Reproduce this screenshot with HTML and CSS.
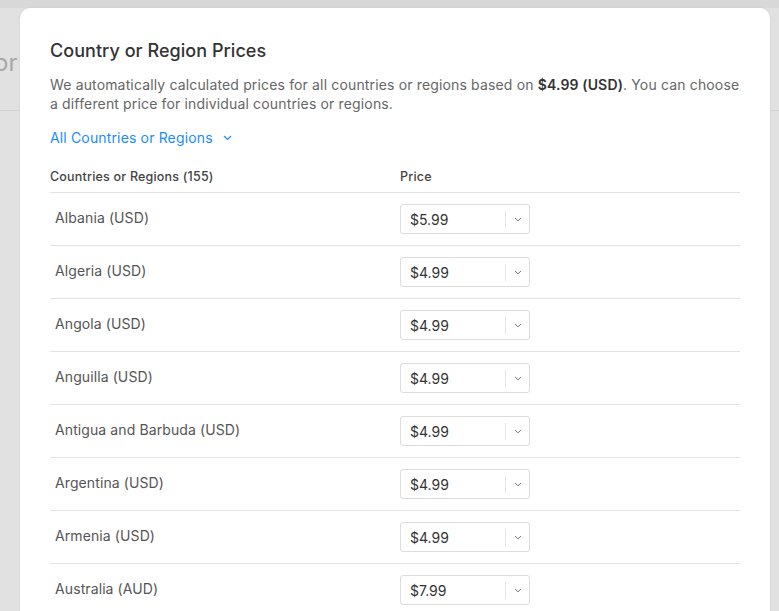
FILE: index.html
```html
<!DOCTYPE html>
<html>
<head>
<meta charset="utf-8">
<link rel="stylesheet" href="styles.css">
</head>
<body>
<div class="backdrop">
  <div class="bg-page">
    <div class="bg-head"><span class="bg-word">or</span></div>
  </div>
  <div class="modal">
    <h1 class="title">Country or Region Prices</h1>
    <p class="desc">We automatically calculated prices for all countries or regions based on <b>$4.99 (USD)</b>. You can choose a different price for individual countries or regions.</p>
    <a class="filter">All Countries or Regions <svg class="chev-blue" width="9" height="6" viewBox="0 0 9 6"><path d="M1 1l3.5 3.5L8 1" fill="none" stroke="#1a8cff" stroke-width="1.2"/></svg></a>
    <div class="table">
      <div class="thead">
        <div class="c1">Countries or Regions (155)</div>
        <div class="c2">Price</div>
      </div>
      <div class="row"><div class="c1 name">Albania (USD)</div><div class="c2"><div class="sel"><span class="val">$5.99</span><span class="arr"><svg width="8" height="5" viewBox="0 0 8 5"><path d="M1 1l3 2.8L7 1" fill="none" stroke="#777" stroke-width="1"/></svg></span></div></div></div>
      <div class="row"><div class="c1 name">Algeria (USD)</div><div class="c2"><div class="sel"><span class="val">$4.99</span><span class="arr"><svg width="8" height="5" viewBox="0 0 8 5"><path d="M1 1l3 2.8L7 1" fill="none" stroke="#777" stroke-width="1"/></svg></span></div></div></div>
      <div class="row"><div class="c1 name">Angola (USD)</div><div class="c2"><div class="sel"><span class="val">$4.99</span><span class="arr"><svg width="8" height="5" viewBox="0 0 8 5"><path d="M1 1l3 2.8L7 1" fill="none" stroke="#777" stroke-width="1"/></svg></span></div></div></div>
      <div class="row"><div class="c1 name">Anguilla (USD)</div><div class="c2"><div class="sel"><span class="val">$4.99</span><span class="arr"><svg width="8" height="5" viewBox="0 0 8 5"><path d="M1 1l3 2.8L7 1" fill="none" stroke="#777" stroke-width="1"/></svg></span></div></div></div>
      <div class="row"><div class="c1 name">Antigua and Barbuda (USD)</div><div class="c2"><div class="sel"><span class="val">$4.99</span><span class="arr"><svg width="8" height="5" viewBox="0 0 8 5"><path d="M1 1l3 2.8L7 1" fill="none" stroke="#777" stroke-width="1"/></svg></span></div></div></div>
      <div class="row"><div class="c1 name">Argentina (USD)</div><div class="c2"><div class="sel"><span class="val">$4.99</span><span class="arr"><svg width="8" height="5" viewBox="0 0 8 5"><path d="M1 1l3 2.8L7 1" fill="none" stroke="#777" stroke-width="1"/></svg></span></div></div></div>
      <div class="row"><div class="c1 name">Armenia (USD)</div><div class="c2"><div class="sel"><span class="val">$4.99</span><span class="arr"><svg width="8" height="5" viewBox="0 0 8 5"><path d="M1 1l3 2.8L7 1" fill="none" stroke="#777" stroke-width="1"/></svg></span></div></div></div>
      <div class="row"><div class="c1 name">Australia (AUD)</div><div class="c2"><div class="sel"><span class="val">$7.99</span><span class="arr"><svg width="8" height="5" viewBox="0 0 8 5"><path d="M1 1l3 2.8L7 1" fill="none" stroke="#777" stroke-width="1"/></svg></span></div></div></div>
    </div>
  </div>
</div>
</body>
</html>
```
FILE: styles.css
```css
* { box-sizing: border-box; }
html, body { margin: 0; padding: 0; }
body {
  width: 779px;
  height: 611px;
  overflow: hidden;
  font-family: Inter, "Liberation Sans", sans-serif;
  background: #d9d9d9;
}
.backdrop {
  position: relative;
  width: 779px;
  height: 611px;
  overflow: hidden;
  background: #d8d8d8;
}
.bg-page {
  margin-top: 8px;
  height: 603px;
  background: #e1e1e1;
}
.bg-head {
  height: 103px;
  border-bottom: 1px solid #d2d2d2;
  padding-top: 40px;
  white-space: nowrap;
}
.bg-word {
  display: inline-block;
  margin-left: -6px;
  font-size: 24px;
  color: #a8a8a8;
}
.modal {
  position: absolute;
  left: 20px;
  top: 8px;
  width: 750px;
  height: 640px;
  background: #fff;
  border-radius: 10px;
  padding: 31px 30px 0 30px;
  box-shadow: 0 0 3px rgba(0,0,0,0.08);
}
.title {
  margin: 0;
  font-size: 18px;
  font-weight: 500;
  color: #333;
  line-height: 24px;
  letter-spacing: 0.05px;
}
.desc {
  margin: 12px 0 0 0;
  font-size: 14px;
  line-height: 19px;
  color: #666;
  letter-spacing: 0.15px;
}
.desc b { color: #333; font-weight: 600; }
.filter {
  display: inline-flex;
  align-items: center;
  gap: 10px;
  margin-top: 15px;
  font-size: 14px;
  line-height: 19px;
  color: #1a8cff;
  letter-spacing: 0.15px;
}
.table {
  margin-top: 17px;
  width: 690px;
}
.thead {
  display: flex;
  height: 29px;
  align-items: center;
  border-bottom: 1px solid #e3e3e3;
  font-size: 12.5px;
  font-weight: 500;
  color: #444;
  padding-bottom: 4px;
  letter-spacing: 0.2px;
}
.c1 { width: 350px; }
.c2 { flex: 1; }
.row {
  display: flex;
  align-items: center;
  height: 53px;
  border-bottom: 1px solid #e3e3e3;
}
.name {
  padding-left: 5px;
  font-size: 14px;
  color: #555;
  margin-top: -3px;
  letter-spacing: 0.1px;
}
.sel {
  display: flex;
  align-items: center;
  width: 130px;
  height: 30px;
  border: 1px solid #dcdcdc;
  border-radius: 3px;
  background: #fff;
}
.val {
  flex: 1;
  padding-left: 9px;
  font-size: 14px;
  color: #333;
}
.arr {
  width: 24px;
  height: 17px;
  border-left: 1px solid #e3e3e3;
  display: flex;
  align-items: center;
  justify-content: center;
}
```
